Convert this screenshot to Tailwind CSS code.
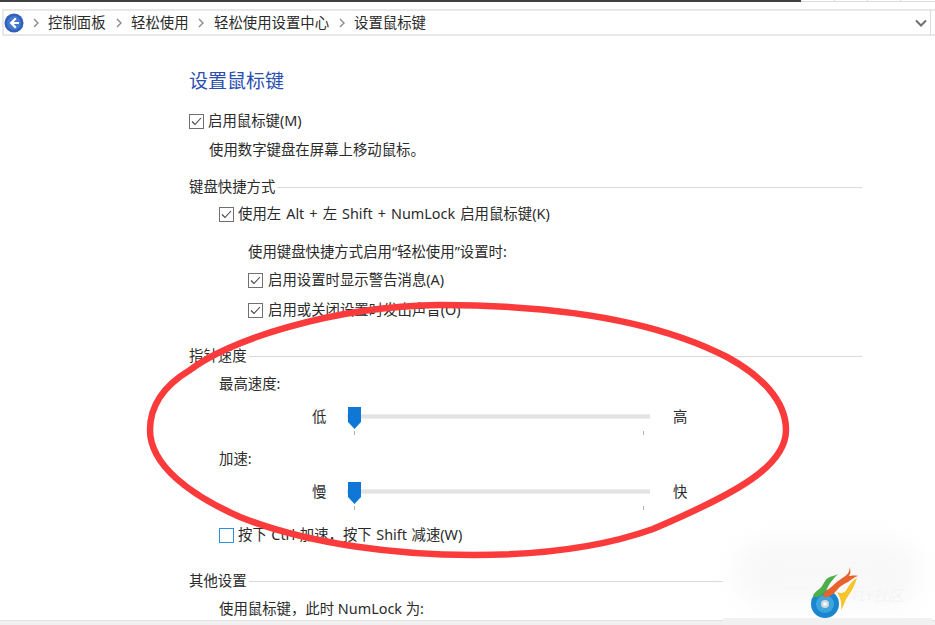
<!DOCTYPE html>
<html lang="zh-CN">
<head>
<meta charset="UTF-8">
<title>设置鼠标键</title>
<script src="https://cdn.jsdelivr.net/npm/@tailwindcss/browser@4"></script>
</head>
<body class="bg-white overflow-hidden">
<div class="relative w-[935px] h-[625px] overflow-hidden bg-white text-[#2b2b2b] text-[14.4px] leading-5 font-['Noto_Sans','Noto_Sans_CJK_SC',sans-serif]">

  <!-- top edge -->
  <div class="flex h-[2px] border-b border-[#dcdcdc]">
    <div class="w-[801px] h-[2px] bg-[#404040]"></div>
    <div class="flex-1 flex">
      <div class="w-[34px] border-r border-[#d8d8d8]"></div>
      <div class="w-[33px] border-r border-[#d8d8d8]"></div>
      <div class="w-[33px] border-r border-[#d8d8d8]"></div>
    </div>
  </div>

  <!-- breadcrumb -->
  <div class="mt-[7px] ml-[2px] h-[27px] flex items-center border-y-2 border-l-2 border-[#e8e8e8] whitespace-nowrap">
    <svg class="w-[20px] h-[20px] shrink-0" viewBox="0 0 20 20">
      <circle cx="10" cy="10" r="9.5" fill="#2f5fb8"/>
      <circle cx="10" cy="10" r="7" fill="#4478d0"/>
      <path d="M11 4.500 5.500 10l5.500 5.500 1.600-1.600L9.800 11H15V9H9.800l2.800-2.900z" fill="#fff"/>
    </svg>
    <svg class="ml-[9px] w-[6px] h-[10px] shrink-0" viewBox="0 0 6 10"><path d="m1 1 4 4-4 4" fill="none" stroke="#8a8a8a" stroke-width="1.400"/></svg>
    <span class="ml-[9px] w-[58px]">控制面板</span>
    <svg class="ml-[10px] w-[6px] h-[10px] shrink-0" viewBox="0 0 6 10"><path d="m1 1 4 4-4 4" fill="none" stroke="#8a8a8a" stroke-width="1.400"/></svg>
    <span class="ml-[9px] w-[58px]">轻松使用</span>
    <svg class="ml-[9px] w-[6px] h-[10px] shrink-0" viewBox="0 0 6 10"><path d="m1 1 4 4-4 4" fill="none" stroke="#8a8a8a" stroke-width="1.400"/></svg>
    <span class="ml-[10px] w-[115px]">轻松使用设置中心</span>
    <svg class="ml-[10px] w-[6px] h-[10px] shrink-0" viewBox="0 0 6 10"><path d="m1 1 4 4-4 4" fill="none" stroke="#8a8a8a" stroke-width="1.400"/></svg>
    <span class="ml-[9px]">设置鼠标键</span>
    <svg class="ml-auto mr-[3px] w-[12px] h-[8px] shrink-0" viewBox="0 0 12 8"><path d="m1 1.500 5 5 5-5" fill="none" stroke="#6f6f6f" stroke-width="2"/></svg>
    <div class="w-[1px] h-[25px] bg-[#dcdcdc] mr-[4px]"></div>
  </div>

  <!-- content -->
  <div class="ml-[189px] w-[673px]">
    <h1 class="mt-[32px] h-[26px] leading-[26px] text-[19px] font-normal text-[#2a4fb0]">设置鼠标键</h1>

    <div class="mt-[17px] h-[20px] flex items-center gap-[4px]">
      <svg class="w-[15px] h-[15px] shrink-0" viewBox="0 0 15 15"><rect x=".5" y=".5" width="14" height="14" fill="#fff" stroke="#707070"/><path d="m3 7.500 3 3 6-6.500" fill="none" stroke="#444" stroke-width="1.100"/></svg>
      <span>启用鼠标键(M)</span>
    </div>
    <p class="mt-[9px] ml-[20px] h-[20px]">使用数字键盘在屏幕上移动鼠标。</p>

    <div class="mt-[17px] h-[20px] flex items-center gap-[2px]">
      <span>键盘快捷方式</span><div class="flex-1 h-[1px] bg-[#d9d9d9]"></div>
    </div>
    <div class="mt-[7px] ml-[30px] h-[20px] flex items-center gap-[4px]">
      <svg class="w-[15px] h-[15px] shrink-0" viewBox="0 0 15 15"><rect x=".5" y=".5" width="14" height="14" fill="#fff" stroke="#707070"/><path d="m3 7.500 3 3 6-6.500" fill="none" stroke="#444" stroke-width="1.100"/></svg>
      <span class="[word-spacing:1.300px]">使用左 Alt + 左 Shift + NumLock 启用鼠标键(K)</span>
    </div>
    <p class="mt-[18px] ml-[59px] h-[20px]">使用键盘快捷方式启用“轻松使用”设置时:</p>
    <div class="mt-[8px] ml-[59px] h-[20px] flex items-center gap-[5px]">
      <svg class="w-[15px] h-[15px] shrink-0" viewBox="0 0 15 15"><rect x=".5" y=".5" width="14" height="14" fill="#fff" stroke="#707070"/><path d="m3 7.500 3 3 6-6.500" fill="none" stroke="#444" stroke-width="1.100"/></svg>
      <span>启用设置时显示警告消息(A)</span>
    </div>
    <div class="mt-[10px] ml-[59px] h-[20px] flex items-center gap-[5px]">
      <svg class="w-[15px] h-[15px] shrink-0" viewBox="0 0 15 15"><rect x=".5" y=".5" width="14" height="14" fill="#fff" stroke="#707070"/><path d="m3 7.500 3 3 6-6.500" fill="none" stroke="#444" stroke-width="1.100"/></svg>
      <span>启用或关闭设置时发出声音(O)</span>
    </div>

    <div class="mt-[26px] h-[20px] flex items-center gap-[2px]">
      <span>指针速度</span><div class="flex-1 h-[1px] bg-[#d9d9d9]"></div>
    </div>
    <p class="mt-[8px] ml-[30px] h-[20px]">最高速度:</p>

    <div class="mt-[3px] ml-[123px] h-[40px] flex items-start">
      <span class="w-[35px] h-[20px] mt-[10px]">低</span>
      <div class="relative w-[303px] h-[40px]">
        <div class="absolute left-0 right-0 top-[17px] h-[5px] bg-[#e3e3e3] border-y border-[#ececec]"></div>
        <svg class="absolute left-[1px] top-[10px] w-[13px] h-[22px]" viewBox="0 0 13 22"><path d="M0 0h13v15l-6.500 7L0 15z" fill="#0f78d7"/></svg>
        <div class="absolute left-[7px] top-[34px] w-[1px] h-[4px] bg-[#b5b5b5]"></div>
        <div class="absolute left-[296px] top-[34px] w-[1px] h-[4px] bg-[#b5b5b5]"></div>
      </div>
      <span class="ml-[23px] h-[20px] mt-[10px]">高</span>
    </div>

    <p class="mt-[12px] ml-[30px] h-[20px]">加速:</p>

    <div class="mt-[3px] ml-[123px] h-[40px] flex items-start">
      <span class="w-[35px] h-[20px] mt-[10px]">慢</span>
      <div class="relative w-[303px] h-[40px]">
        <div class="absolute left-0 right-0 top-[17px] h-[5px] bg-[#e3e3e3] border-y border-[#ececec]"></div>
        <svg class="absolute left-[1px] top-[10px] w-[13px] h-[22px]" viewBox="0 0 13 22"><path d="M0 0h13v15l-6.500 7L0 15z" fill="#0f78d7"/></svg>
        <div class="absolute left-[7px] top-[34px] w-[1px] h-[4px] bg-[#b5b5b5]"></div>
        <div class="absolute left-[296px] top-[34px] w-[1px] h-[4px] bg-[#b5b5b5]"></div>
      </div>
      <span class="ml-[23px] h-[20px] mt-[10px]">快</span>
    </div>

    <div class="mt-[13px] ml-[30px] h-[20px] flex items-center gap-[4px]">
      <div class="w-[15px] h-[15px] border border-[#2f8fdc] bg-white shrink-0"></div>
      <span class="[word-spacing:0.800px]">按下 Ctrl 加速，按下 Shift 减速(W)</span>
    </div>

    <div class="mt-[26px] h-[20px] flex items-center gap-[2px]">
      <span>其他设置</span><div class="flex-1 h-[1px] bg-[#d9d9d9]"></div>
    </div>
    <p class="mt-[8px] ml-[30px] h-[20px]">使用鼠标键，此时 NumLock 为:</p>
  </div>

  <!-- bottom edge -->
  <div class="absolute left-0 right-0 bottom-0 h-[5px] bg-[#f0f0f0] border-t border-[#e2e2e2]"></div>

  <!-- watermark patch -->
  <div class="absolute left-[723px] top-[520px] w-[209px] h-[98px] bg-white">
    <div class="absolute left-[12px] top-[20px] w-[185px] h-[65px] rounded-[30px] bg-[#f8f8f8] blur-md"></div>
  </div>
  <div class="absolute left-[723px] top-[618px] w-[209px] h-[7px] bg-[#f1f1f1]"></div>

  <!-- site logo -->
  <svg class="absolute left-[808px] top-[564px] w-[56px] h-[56px]" viewBox="0 0 56 56">
    <circle cx="17" cy="40" r="14" fill="#1a86d0"/>
    <circle cx="17" cy="40" r="9" fill="#3da4de"/>
    <circle cx="17" cy="40" r="4" fill="#cfd8de"/>
    <circle cx="17" cy="40" r="1.800" fill="#fff"/>
    <path d="M30 10C24 13 20 12 17 17C14 22 14 23 10 26C6 29 4 32 6 33C12 34 16 30 19 25C21 21 22 18 30 10Z" fill="#4bb04a"/>
    <path d="M41 3C43 8 38 12 33 15C28 18 26 21 22 24C18 27 15 29 15 33C20 34 25 31 29 26C32 22 36 20 40 18C43 16 46 13 50 12C46 11 43 12 41 12C43 9 43 6 41 3Z" fill="#e8622e"/>
    <path d="M49 14C44 16 41 22 37 28C35 30 32 29 29 28C32 33 34 38 33 46C36 42 37 36 40 32C44 27 47 20 49 14Z" fill="#f6c52c"/>
  </svg>
  <span class="absolute left-[852px] top-[585px] text-[15px] italic text-[#f4f4f4]">FLY社区</span>

  <!-- red hand drawn ellipse -->
  <svg class="absolute left-0 top-0 w-[935px] h-[625px] pointer-events-none" viewBox="0 0 935 625">
    <path d="M150 430C150 405 165 385 190 370C225 342 330 306 440 305C520 305 640 312 727 357C760 375 786 400 786 430C786 465 740 492 653 529C600 548 540 555 473 555C400 555 310 545 240 517C190 495 150 465 150 430Z" fill="none" stroke="#fb3b3b" stroke-width="6.500"/>
  </svg>
</div>
</body>
</html>
